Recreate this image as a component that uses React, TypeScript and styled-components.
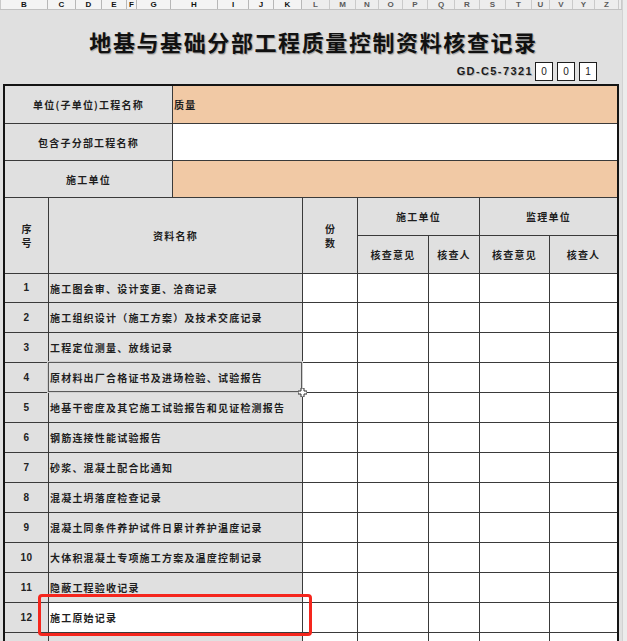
import React from 'react';
import styled, { createGlobalStyle } from 'styled-components';

const GlobalStyle = createGlobalStyle`
  html, body { margin: 0; padding: 0; background: #e0e0e0; overflow: hidden; }
  body { font-family: "Noto Sans CJK SC", "Liberation Sans", sans-serif; }
`;

const Page = styled.div`
  position: relative;
  width: 627px;
  height: 641px;
  overflow: hidden;
  background: #e0e0e0;
  display: flex;
  align-items: flex-start;
`;

const Main = styled.div`
  width: 622px;
  flex: 0 0 622px;
  display: flex;
  flex-direction: column;
  & > * { flex-shrink: 0; }
`;

const EdgeStrip = styled.div`
  flex: 1;
  align-self: stretch;
  background: #ececec;
  border-left: 1px solid #d2d2d2;
`;

const ColumnBar = styled.div`
  display: flex;
  height: 9px;
  background: #ececec;
  border-bottom: 1px solid #c2c2c2;
  overflow: hidden;
`;

const ColHead = styled.div<{ $w: number; $active?: boolean }>`
  flex: 0 0 ${p => p.$w}px;
  box-sizing: border-box;
  border-right: 1px solid ${p => (p.$active ? '#b8b8b8' : '#cacaca')};
  background: ${p => (p.$active ? '#f4f4f4' : '#ededed')};
  display: flex;
  align-items: center;
  justify-content: center;
  overflow: hidden;
  font: bold 8px/9px "Liberation Sans", sans-serif;
  color: ${p => (p.$active ? '#121212' : '#5a5a5a')};
`;

const Sheet = styled.div`
  display: flex;
  flex-direction: column;
  padding-left: 3px;
  & > * { flex-shrink: 0; }
`;

const Title = styled.h1`
  margin: 18px 0 0;
  height: 26px;
  line-height: 26px;
  text-align: center;
  font-family: "Noto Sans CJK SC", sans-serif;
  font-size: 22px;
  font-weight: 700;
  letter-spacing: 1.6px;
  color: #111;
  text-shadow: 1px 1px 1px rgba(0, 0, 0, 0.3);
  padding-left: 2px;
`;

const CodeRow = styled.div`
  margin-top: 8px;
  height: 19px;
  display: flex;
  justify-content: flex-end;
  align-items: center;
  padding-right: 25px;
`;

const CodeLabel = styled.span`
  font: bold 11px/19px "Liberation Sans", sans-serif;
  letter-spacing: 1.4px;
  color: #1c1c1c;
  text-shadow: 1px 1px 0 rgba(0, 0, 0, 0.2);
  margin-right: 2px;
`;

const BoxGroup = styled.div`
  display: flex;
  gap: 4px;
`;

const DigitBox = styled.span`
  box-sizing: border-box;
  width: 18px;
  height: 19px;
  border: 1px solid #1e1e1e;
  background: #fff;
  display: flex;
  align-items: center;
  justify-content: center;
  font: 10px/1 "Liberation Sans", sans-serif;
  color: #222;
`;

const Form = styled.div`
  position: relative;
  margin-top: 3px;
  width: 616px;
  box-sizing: border-box;
  border: 2px solid #141414;
  border-bottom: none;
  display: grid;
  grid-template-columns: 44px 124px 130px 55px 71px 51px 70px 67px;
  grid-template-rows: 38px 37px 37px 38px 38px 29px repeat(12, 30px);
`;

type Tone = 'gray' | 'white' | 'peach';
const toneColor: Record<Tone, string> = {
  gray: '#e0e0e0',
  white: '#ffffff',
  peach: '#f1c9a5',
};

const Cell = styled.div<{
  $col: string;
  $row: string;
  $tone?: Tone;
  $left?: boolean;
  $last?: boolean;
}>`
  grid-column: ${p => p.$col};
  grid-row: ${p => p.$row};
  box-sizing: border-box;
  border-right: ${p => (p.$last ? 'none' : '1px solid #3a3a3a')};
  border-bottom: 1px solid #3a3a3a;
  background: ${p => toneColor[p.$tone ?? 'gray']};
  display: flex;
  align-items: center;
  justify-content: ${p => (p.$left ? 'flex-start' : 'center')};
  padding-left: ${p => (p.$left ? '1px' : '0')};
  overflow: hidden;
  white-space: nowrap;
  font-size: 10px;
  font-weight: 700;
  letter-spacing: 1.2px;
  color: #1e1e1e;
`;

const Stacked = styled.span`
  display: flex;
  flex-direction: column;
  align-items: center;
  line-height: 14px;
  letter-spacing: 0;
`;

const Num = styled.span`
  font: bold 10px/1 "Liberation Sans", sans-serif;
  letter-spacing: 0.5px;
  color: #222;
`;

const Selection = styled.div`
  position: absolute;
  left: 42px;
  top: 275px;
  width: 256px;
  height: 32px;
  box-sizing: border-box;
  border: 1px solid #cfcfcf;
  box-shadow: inset 0 0 0 1px #5a5a5a;
  pointer-events: none;
`;

const FillHandle = styled.svg`
  position: absolute;
  right: -5px;
  bottom: -5px;
`;

const Highlight = styled.div`
  position: absolute;
  left: 38px;
  top: 594px;
  width: 274px;
  height: 42px;
  box-sizing: border-box;
  border: 3px solid #f5261d;
  border-radius: 4px;
  pointer-events: none;
`;

const columns: { l: string; w: number; active?: boolean }[] = [
  { l: '', w: 1 },
  { l: 'B', w: 47, active: true },
  { l: 'C', w: 28, active: true },
  { l: 'D', w: 26, active: true },
  { l: 'E', w: 25, active: true },
  { l: 'F', w: 10, active: true },
  { l: 'G', w: 34, active: true },
  { l: 'H', w: 47, active: true },
  { l: 'I', w: 31, active: true },
  { l: 'J', w: 25, active: true },
  { l: 'K', w: 28, active: true },
  { l: 'L', w: 28 },
  { l: 'M', w: 26 },
  { l: 'N', w: 23 },
  { l: 'O', w: 24 },
  { l: 'P', w: 25 },
  { l: 'Q', w: 27 },
  { l: 'R', w: 25 },
  { l: 'S', w: 26 },
  { l: 'T', w: 26 },
  { l: 'U', w: 18 },
  { l: 'V', w: 23 },
  { l: 'Y', w: 22 },
  { l: 'Z', w: 24 },
  { l: '', w: 3 },
];

const items = [
  '施工图会审、设计变更、洽商记录',
  '施工组织设计（施工方案）及技术交底记录',
  '工程定位测量、放线记录',
  '原材料出厂合格证书及进场检验、试验报告',
  '地基干密度及其它施工试验报告和见证检测报告',
  '钢筋连接性能试验报告',
  '砂浆、混凝土配合比通知',
  '混凝土坍落度检查记录',
  '混凝土同条件养护试件日累计养护温度记录',
  '大体积混凝土专项施工方案及温度控制记录',
  '隐蔽工程验收记录',
  '施工原始记录',
  '',
];

export default function App() {
  return (
    <>
      <GlobalStyle />
      <Page>
        <Main>
          <ColumnBar>
            {columns.map((c, i) => (
              <ColHead key={i} $w={c.w} $active={c.active}>
                {c.l}
              </ColHead>
            ))}
          </ColumnBar>
          <Sheet>
            <Title>地基与基础分部工程质量控制资料核查记录</Title>
            <CodeRow>
              <CodeLabel>GD-C5-7321</CodeLabel>
              <BoxGroup>
                <DigitBox>0</DigitBox>
                <DigitBox>0</DigitBox>
                <DigitBox>1</DigitBox>
              </BoxGroup>
            </CodeRow>
            <Form>
              <Cell $col="1 / 3" $row="1">单位(子单位)工程名称</Cell>
              <Cell $col="3 / 9" $row="1" $tone="peach" $left $last>质量</Cell>
              <Cell $col="1 / 3" $row="2">包含子分部工程名称</Cell>
              <Cell $col="3 / 9" $row="2" $tone="white" $last />
              <Cell $col="1 / 3" $row="3">施工单位</Cell>
              <Cell $col="3 / 9" $row="3" $tone="peach" $last />

              <Cell $col="1" $row="4 / 6">
                <Stacked>
                  <span>序</span>
                  <span>号</span>
                </Stacked>
              </Cell>
              <Cell $col="2 / 4" $row="4 / 6">资料名称</Cell>
              <Cell $col="4" $row="4 / 6">
                <Stacked>
                  <span>份</span>
                  <span>数</span>
                </Stacked>
              </Cell>
              <Cell $col="5 / 7" $row="4">施工单位</Cell>
              <Cell $col="7 / 9" $row="4" $last>监理单位</Cell>
              <Cell $col="5" $row="5">核查意见</Cell>
              <Cell $col="6" $row="5">核查人</Cell>
              <Cell $col="7" $row="5">核查意见</Cell>
              <Cell $col="8" $row="5" $last>核查人</Cell>

              {items.map((name, i) => {
                const row = String(6 + i);
                return (
                  <React.Fragment key={i}>
                    <Cell $col="1" $row={row}>
                      {name && <Num>{i + 1}</Num>}
                    </Cell>
                    <Cell $col="2 / 4" $row={row} $left $tone={i === 11 ? 'white' : 'gray'}>
                      {name}
                    </Cell>
                    <Cell $col="4" $row={row} $tone="white" />
                    <Cell $col="5" $row={row} $tone="white" />
                    <Cell $col="6" $row={row} $tone="white" />
                    <Cell $col="7" $row={row} $tone="white" />
                    <Cell $col="8" $row={row} $tone="white" $last />
                  </React.Fragment>
                );
              })}

              <Selection>
                <FillHandle width="9" height="9" viewBox="0 0 9 9">
                  <path d="M3 0h3v3h3v3H6v3H3V6H0V3h3z" fill="#fff" stroke="#333" strokeWidth="1" />
                </FillHandle>
              </Selection>
            </Form>
          </Sheet>
        </Main>
        <EdgeStrip />
        <Highlight />
      </Page>
    </>
  );
}
